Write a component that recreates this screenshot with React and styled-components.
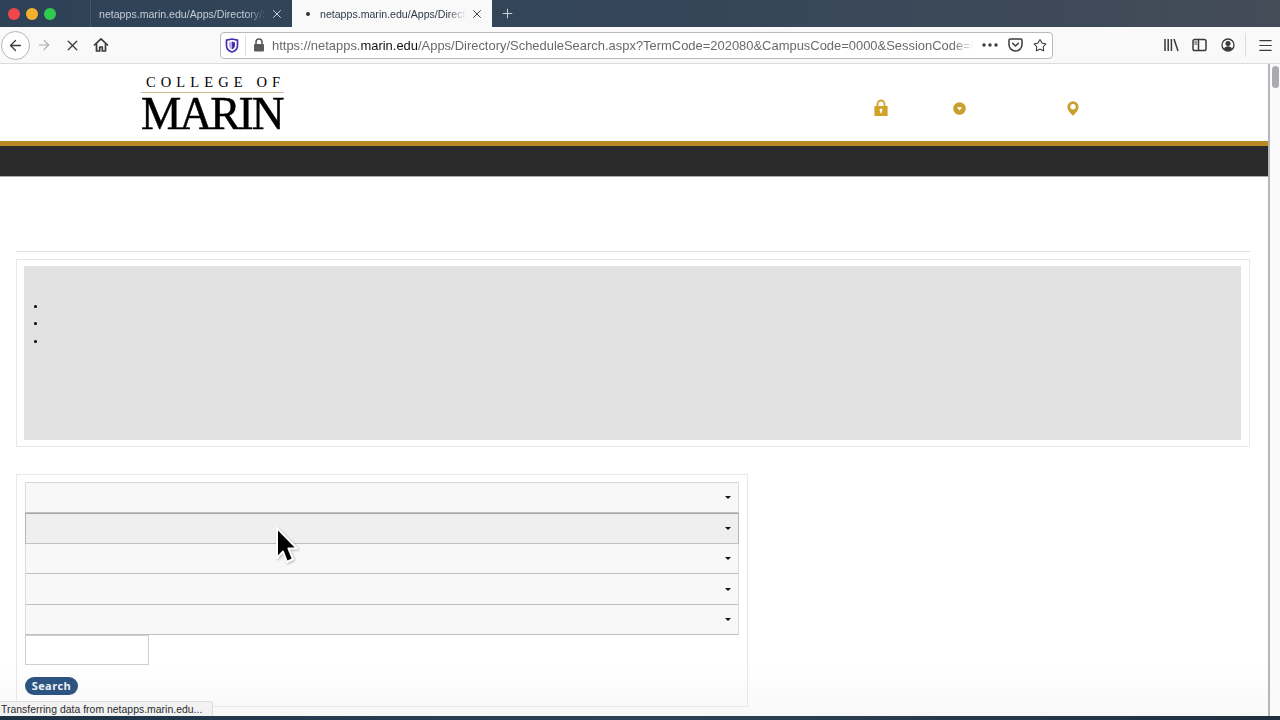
import React from "react";
import styled, { createGlobalStyle } from "styled-components";
import { X, Plus, ArrowLeft, ArrowRight, Star, Menu } from "lucide-react";

const Global = createGlobalStyle`
  html, body { margin: 0; padding: 0; background: #fff; }
  * { box-sizing: border-box; }
  #root { width: 1280px; height: 720px; overflow: hidden; }
`;

const Screen = styled.div`
  position: relative;
  width: 1280px;
  height: 720px;
  overflow: hidden;
  display: flex;
  flex-direction: column;
  font-family: "Liberation Sans", Arial, sans-serif;
`;

const TabStrip = styled.div`
  height: 27px;
  flex: none;
  display: flex;
  align-items: stretch;
  background: linear-gradient(90deg, #2e4257 0%, #354659 55%, #444c58 100%);
`;
const Lights = styled.div`
  width: 90px;
  display: flex;
  align-items: center;
  gap: 6px;
  padding-left: 8px;
`;
const Light = styled.span`
  width: 12px;
  height: 12px;
  border-radius: 50%;
  background: ${p => p.$c};
`;
const Tab = styled.div`
  width: ${p => (p.$active ? 200 : 202)}px;
  display: flex;
  align-items: center;
  font-size: 10.6px;
  white-space: nowrap;
  padding-left: ${p => (p.$active ? "14px" : "8px")};
  padding-right: 8px;
  color: ${p => (p.$active ? "#2f3a47" : "#c5ced8")};
  background: ${p => (p.$active ? "#f9f9fa" : "transparent")};
  border-left: ${p => (p.$active ? "0" : "1px solid #44566a")};
  svg { flex: none; color: ${p => (p.$active ? "#333" : "#d8dee5")}; }
`;
const TabTitle = styled.span`
  flex: 1;
  overflow: hidden;
  margin-right: 4px;
  -webkit-mask-image: linear-gradient(90deg, #000 88%, transparent 100%);
  mask-image: linear-gradient(90deg, #000 88%, transparent 100%);
`;
const Dot = styled.span`
  width: 4px;
  height: 4px;
  border-radius: 50%;
  background: #333;
  margin-right: 10px;
  flex: none;
`;
const NewTab = styled.div`
  width: 30px;
  display: flex;
  align-items: center;
  justify-content: center;
  color: #d4dae1;
`;

const Toolbar = styled.div`
  height: 37px;
  flex: none;
  display: flex;
  align-items: center;
  background: #f9f9fa;
  border-bottom: 1px solid #dcdcde;
  color: #3a3a3c;
`;
const BackButton = styled.div`
  width: 29px;
  height: 29px;
  flex: none;
  border-radius: 50%;
  border: 1px solid #b5b5b7;
  background: #fff;
  margin-left: 1px;
  display: flex;
  align-items: center;
  justify-content: center;
`;
const ToolButton = styled.div`
  width: ${p => p.$w || 29}px;
  flex: none;
  display: flex;
  align-items: center;
  justify-content: center;
  color: ${p => p.$c || "#3a3a3c"};
`;
const MenuButton = styled.div`
  width: 34px;
  flex: none;
  display: flex;
  align-items: center;
  justify-content: flex-end;
  padding-right: 6px;
`;
const UrlBar = styled.div`
  width: 833px;
  height: 27px;
  flex: none;
  display: flex;
  align-items: center;
  background: #fff;
  border: 1px solid #b9b9bb;
  border-radius: 4px;
`;
const UrlDivider = styled.span`
  width: 1px;
  height: 21px;
  background: #dedee0;
  margin: 0 7px 0 6px;
`;
const UrlText = styled.div`
  width: 702px;
  margin-left: 7px;
  font-size: 12.95px;
  color: #6a6a6e;
  white-space: nowrap;
  overflow: hidden;
  -webkit-mask-image: linear-gradient(90deg, #000 97%, transparent 100%);
  mask-image: linear-gradient(90deg, #000 97%, transparent 100%);
  b { font-weight: 400; color: #111; }
`;
const ToolGap = styled.div`
  width: ${p => p.$w}px;
  flex: none;
`;
const ToolDivider = styled.span`
  width: 1px;
  height: 24px;
  background: #dcdcde;
  flex: none;
`;

const Viewport = styled.div`
  flex: 1;
  min-height: 0;
  display: flex;
`;
const Page = styled.main`
  width: 1270px;
  flex: none;
  border-right: 2px solid #b4b6ba;
  background: linear-gradient(180deg, #fff 0%, #fff 92%, #f8f8f8 100%);
  overflow: hidden;
`;
const Scrollbar = styled.div`
  flex: 1;
  background: #fafafa;
  padding: 2px 1px 0 2px;
`;
const Thumb = styled.div`
  height: 22px;
  border-radius: 4px;
  background: #a9abae;
`;

const Header = styled.header`
  height: 77px;
  display: flex;
  align-items: flex-start;
  padding: 12px 0 0 141px;
  background: #fff;
`;
const Logo = styled.div`
  width: 143px;
  font-family: "Liberation Serif", "Times New Roman", serif;
  color: #000;
`;
const LogoTop = styled.div`
  font-size: 14.5px;
  line-height: 13px;
  letter-spacing: 5.1px;
  white-space: nowrap;
  padding-left: 5px;
  padding-bottom: 3px;
  border-bottom: 1px solid #cdbf94;
`;
const LogoName = styled.div`
  margin-top: 2px;
  font-size: 47px;
  line-height: 37px;
  letter-spacing: -2px;
  white-space: nowrap;
  -webkit-text-stroke: 0.5px #000;
  transform: scaleX(0.965);
  transform-origin: left;
`;
const Nav = styled.nav`
  display: flex;
  margin-left: 590px;
  margin-top: 23px;
  color: #c99f2d;
`;
const NavItem = styled.a`
  width: ${p => p.$w}px;
  display: flex;
  align-items: center;
  height: 18px;
`;
const GoldBar = styled.div`
  height: 5px;
  background: #b98a24;
`;
const DarkBar = styled.div`
  height: 31px;
  background: #2b2b2b;
  border-bottom: 1px solid #aaa;
`;

const Content = styled.div`
  padding: 74px 18px 0 16px;
`;
const Rule = styled.hr`
  margin: 0 0 7px;
  border: 0;
  border-top: 1px solid #ddd;
`;
const Well = styled.section`
  border: 1px solid #e8e8e8;
  padding: 6px 8px 6px 7px;
  height: 188px;
`;
const Notice = styled.div`
  height: 174px;
  background: #e1e1e1;
  padding-top: 32px;
`;
const Bullets = styled.ul`
  margin: 0;
  padding: 0 0 0 23px;
  list-style: disc;
  font-size: 10px;
  color: #000;
`;
const Bullet = styled.li`
  height: 17.4px;
  line-height: 17.4px;
`;
const SearchCard = styled.section`
  margin-top: 27px;
  width: 732px;
  height: 233px;
  border: 1px solid #e8e8e8;
  padding: 7px 8px 0;
`;
const Select = styled.div`
  height: ${p => (p.$hover ? 31 : 30.5)}px;
  display: flex;
  align-items: center;
  justify-content: flex-end;
  padding-right: 7px;
  background: ${p => (p.$hover ? "#efefef" : "#f8f8f8")};
  border: 1px solid ${p => (p.$hover ? "#b5b5b5" : "#dcdcdc")};
  border-bottom-color: #c0c0c0;
  border-top-color: ${p => (p.$hover ? "#a8a8a8" : "transparent")};
  &:first-child { border-top-color: #d8d8d8; }
`;
const Caret = styled.span`
  width: 0;
  height: 0;
  border-left: 3px solid transparent;
  border-right: 3px solid transparent;
  border-top: 3px solid #111;
`;
const TextInput = styled.input`
  display: block;
  width: 124px;
  height: 30px;
  border: 1px solid #cfcfcf;
  background: #fff;
  padding: 0;
  margin: 0;
  outline: none;
`;
const SearchButton = styled.button`
  display: block;
  width: 53px;
  height: 18px;
  margin-top: 12px;
  padding: 0;
  border: 0;
  border-radius: 9px;
  background: #2d5480;
  color: #eef2f6;
  font-family: "Open Sans", "Liberation Sans", sans-serif;
  font-size: 11px;
  font-weight: 700;
  letter-spacing: 0.4px;
  line-height: 18px;
`;

const BottomEdge = styled.div`
  height: 4px;
  flex: none;
  background: linear-gradient(90deg, #1f3347, #2d4257 50%, #1f2f40 100%);
`;
const StatusBar = styled.div`
  position: absolute;
  left: 0;
  bottom: 4px;
  width: 213px;
  height: 15px;
  padding-left: 1px;
  background: #f2f2f3;
  border: 1px solid #dcdcde;
  border-left: 0;
  border-bottom: 0;
  border-top-right-radius: 3px;
  font-size: 10.4px;
  line-height: 15px;
  letter-spacing: 0.03px;
  color: #2b2b2b;
  white-space: nowrap;
`;
const Pointer = styled.svg`
  position: absolute;
  left: 273px;
  top: 524px;
  filter: drop-shadow(1px 1px 1px rgba(0, 0, 0, 0.25));
`;

const s = { fill: "none", stroke: "currentColor", strokeWidth: 1.5, strokeLinecap: "round", strokeLinejoin: "round" };

const HomeIcon = () => (
  <svg width="16" height="16" viewBox="0 0 16 16">
    <path d="M1.500 8 8 1.800 14.500 8" {...s} strokeWidth="1.7" />
    <path d="M3.500 7v7h3.200v-4h2.600v4h3.200V7" {...s} strokeWidth="1.7" />
  </svg>
);
const ShieldIcon = () => (
  <svg width="14" height="15" viewBox="0 0 14 15">
    <path d="M1.500 2.200 7 1l5.500 1.200v5.300C12.500 11 10 13.200 7 14 4 13.200 1.500 11 1.500 7.500z" fill="none" stroke="#4b2fb0" strokeWidth="1.7" strokeLinejoin="round" />
    <path d="M7 3.600 10 4.400v3C10 9.400 8.600 10.700 7 11.400z" fill="#4b2fb0" />
    <path d="M7 3.600 4 4.400v3C4 9.400 5.400 10.700 7 11.400z" fill="#b9a9ea" />
  </svg>
);
const UrlLock = () => (
  <svg width="12" height="14" viewBox="0 0 12 14">
    <path d="M3 6V4a3 3 0 0 1 6 0v2" fill="none" stroke="#5b5b5f" strokeWidth="1.600" />
    <rect x="1" y="6" width="10" height="7.500" rx="1" fill="#5b5b5f" />
  </svg>
);
const DotsIcon = () => (
  <svg width="16" height="4" viewBox="0 0 16 4" fill="#3a3a3c">
    <circle cx="2" cy="2" r="1.700" /><circle cx="8" cy="2" r="1.700" /><circle cx="14" cy="2" r="1.700" />
  </svg>
);
const PocketIcon = () => (
  <svg width="15" height="14" viewBox="0 0 15 14">
    <path d="M1 2.200A1.200 1.200 0 0 1 2.200 1h10.600A1.200 1.200 0 0 1 14 2.200V6.500a6.500 6.500 0 0 1-13 0z" {...s} />
    <path d="M4.600 5.200 7.500 8l2.900-2.800" {...s} />
  </svg>
);
const LibraryIcon = () => (
  <svg width="15" height="14" viewBox="0 0 15 14">
    <path d="M1 1v12M4.200 1v12M7.400 1v12M10 1l4 12" {...s} strokeLinecap="butt" />
  </svg>
);
const SidebarIcon = () => (
  <svg width="15" height="14" viewBox="0 0 15 14">
    <rect x="1" y="1.500" width="13" height="11" rx="1.800" {...s} />
    <path d="M6.500 1.500v11" {...s} />
    <path d="M2.800 4h2M2.800 6h2" {...s} strokeWidth="1.100" />
  </svg>
);
const AccountIcon = () => (
  <svg width="14" height="14" viewBox="0 0 14 14">
    <circle cx="7" cy="7" r="6" {...s} strokeWidth="1.300" />
    <circle cx="7" cy="5.400" r="2.500" fill="currentColor" />
    <path d="M2.800 11c.8-2 2.400-2.800 4.200-2.800S10.400 9 11.200 11A6 6 0 0 1 2.800 11z" fill="currentColor" />
  </svg>
);
const GoldLock = () => (
  <svg width="14" height="18" viewBox="0 0 14 18">
    <path d="M3.500 8V5a3.500 3.500 0 0 1 7 0v3" fill="none" stroke="#d0a326" strokeWidth="1.800" />
    <path d="M1 7h12a.6.6 0 0 1 .6.6V17H.4V7.600A.6.6 0 0 1 1 7z" fill="#d0a326" />
    <circle cx="7" cy="11" r="1.500" fill="#fff" />
    <rect x="6.300" y="11" width="1.400" height="3.200" fill="#fff" />
  </svg>
);
const GoldDown = () => (
  <svg width="13" height="13" viewBox="0 0 13 13">
    <circle cx="6.500" cy="6.500" r="6.300" fill="#c9a02e" />
    <path d="M3.800 5.300h5.400L6.500 8.600z" fill="#fff" />
  </svg>
);
const GoldPin = () => (
  <svg width="12" height="15" viewBox="0 0 12 15">
    <path d="M6 .3a5.600 5.600 0 0 1 5.600 5.600C11.600 9.400 8 12.500 6 14.700 4 12.500.4 9.400.4 5.900A5.600 5.600 0 0 1 6 .3z" fill="#c9a02e" />
    <circle cx="6" cy="5.700" r="2.700" fill="#fff" />
  </svg>
);

export default function App() {
  return (
    <Screen>
      <Global />
      <TabStrip>
        <Lights>
          <Light $c="#f0474c" />
          <Light $c="#f5b02e" />
          <Light $c="#2ecb4e" />
        </Lights>
        <Tab>
          <TabTitle>netapps.marin.edu/Apps/Directory/ScheduleSearch</TabTitle>
          <X size={14} strokeWidth={1.6} />
        </Tab>
        <Tab $active>
          <Dot />
          <TabTitle>netapps.marin.edu/Apps/Directory/ScheduleSearch</TabTitle>
          <X size={14} strokeWidth={1.6} />
        </Tab>
        <NewTab><Plus size={15} strokeWidth={1.5} /></NewTab>
      </TabStrip>

      <Toolbar>
        <BackButton><ArrowLeft size={17} strokeWidth={1.8} /></BackButton>
        <ToolButton $w={28} $c="#a9a9ab"><ArrowRight size={16} strokeWidth={1.6} /></ToolButton>
        <ToolButton $w={28}><X size={17} strokeWidth={1.8} /></ToolButton>
        <ToolButton $w={30}><HomeIcon /></ToolButton>
        <ToolGap $w={104} />
        <UrlBar>
          <ToolGap $w={4} />
          <ShieldIcon />
          <UrlDivider />
          <UrlLock />
          <UrlText>
            https://netapps.<b>marin.edu</b>/Apps/Directory/ScheduleSearch.aspx?TermCode=202080&amp;CampusCode=0000&amp;SessionCode=0000
          </UrlText>
          <ToolGap $w={8} />
          <DotsIcon />
          <ToolGap $w={10} />
          <PocketIcon />
          <ToolGap $w={10} />
          <ToolButton $w={14}><Star size={15} strokeWidth={1.8} /></ToolButton>
        </UrlBar>
        <ToolGap $w={111} />
        <LibraryIcon />
        <ToolGap $w={13} />
        <SidebarIcon />
        <ToolGap $w={14} />
        <AccountIcon />
        <ToolGap $w={10} />
        <ToolDivider />
        <MenuButton><Menu size={17} strokeWidth={1.7} /></MenuButton>
      </Toolbar>

      <Viewport>
        <Page>
          <Header>
            <Logo>
              <LogoTop>COLLEGE OF</LogoTop>
              <LogoName>MARIN</LogoName>
            </Logo>
            <Nav>
              <NavItem $w={79}><GoldLock /></NavItem>
              <NavItem $w={114}><GoldDown /></NavItem>
              <NavItem $w={20}><GoldPin /></NavItem>
            </Nav>
          </Header>
          <GoldBar />
          <DarkBar />
          <Content>
            <Rule />
            <Well>
              <Notice>
                <Bullets>
                  <Bullet />
                  <Bullet />
                  <Bullet />
                </Bullets>
              </Notice>
            </Well>
            <SearchCard>
              <Select><Caret /></Select>
              <Select $hover><Caret /></Select>
              <Select><Caret /></Select>
              <Select><Caret /></Select>
              <Select><Caret /></Select>
              <TextInput aria-label="search" />
              <SearchButton>Search</SearchButton>
            </SearchCard>
          </Content>
        </Page>
        <Scrollbar><Thumb /></Scrollbar>
      </Viewport>
      <BottomEdge />

      <StatusBar>Transferring data from netapps.marin.edu...</StatusBar>
      <Pointer width="28" height="42" viewBox="0 0 28 42">
        <path d="M4 4V34L10 27.500 14 38 20 35 15.500 24.500H24Z" fill="#000" stroke="#fff" strokeWidth="2" strokeLinejoin="round" />
      </Pointer>
    </Screen>
  );
}
